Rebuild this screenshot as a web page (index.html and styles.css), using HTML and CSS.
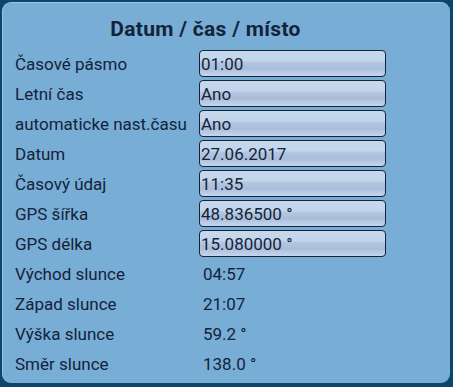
FILE: index.html
```html
<!DOCTYPE html>
<html lang="cs">
<head>
<meta charset="utf-8">
<title>Datum / čas / místo</title>
<link rel="stylesheet" href="styles.css">
</head>
<body>
<div class="panel">
  <div class="content">
    <h1 class="title">Datum / čas / místo</h1>
    <div class="grid">
      <div class="label">Časové pásmo</div><div class="field">01:00</div>
      <div class="label">Letní čas</div><div class="field">Ano</div>
      <div class="label">automaticke nast.času</div><div class="field">Ano</div>
      <div class="label">Datum</div><div class="field">27.06.2017</div>
      <div class="label">Časový údaj</div><div class="field">11:35</div>
      <div class="label">GPS šířka</div><div class="field">48.836500 °</div>
      <div class="label">GPS délka</div><div class="field">15.080000 °</div>
      <div class="label">Východ slunce</div><div class="value">04:57</div>
      <div class="label">Západ slunce</div><div class="value">21:07</div>
      <div class="label">Výška slunce</div><div class="value">59.2 °</div>
      <div class="label">Směr slunce</div><div class="value">138.0 °</div>
    </div>
  </div>
</div>
</body>
</html>
```
FILE: styles.css
```css
html, body {
  margin: 0;
  padding: 0;
}
body {
  width: 453px;
  height: 387px;
  background: #0e466b;
  overflow: hidden;
  font-family: Roboto, "Liberation Sans", Arial, sans-serif;
  color: #14233a;
}
.panel {
  box-sizing: border-box;
  margin: 2px 0 0 2px;
  width: 448px;
  height: 381px;
  background: #78add6;
  border-radius: 9px;
  border-top: 1px solid #9cc3e3;
  border-left: 1px solid #9cc3e3;
  padding: 0 0 0 12px;
}
.content {
  width: 381px;
}
.title {
  margin: 0;
  height: 47px;
  display: flex;
  align-items: center;
  justify-content: center;
  font-size: 21px;
  font-weight: bold;
  letter-spacing: 0.3px;
  padding-top: 4px;
  box-sizing: border-box;
}
.grid {
  display: grid;
  grid-template-columns: 184px 187px;
  grid-auto-rows: 27px;
  row-gap: 3px;
}
.label {
  font-size: 17px;
  display: flex;
  align-items: center;
  white-space: nowrap;
}
.field {
  box-sizing: border-box;
  border: 1px solid #15243a;
  border-radius: 4px;
  background: linear-gradient(to bottom,
    #c6d8ec 0%, #c2d5eb 40%, #b3c7e2 45%, #a9bdd9 70%, #b9cbe4 85%, #c4d5ea 100%);
  font-size: 17px;
  display: flex;
  align-items: center;
  padding-left: 1px;
}
.value {
  font-size: 17px;
  display: flex;
  align-items: center;
  padding-left: 4px;
}
```
